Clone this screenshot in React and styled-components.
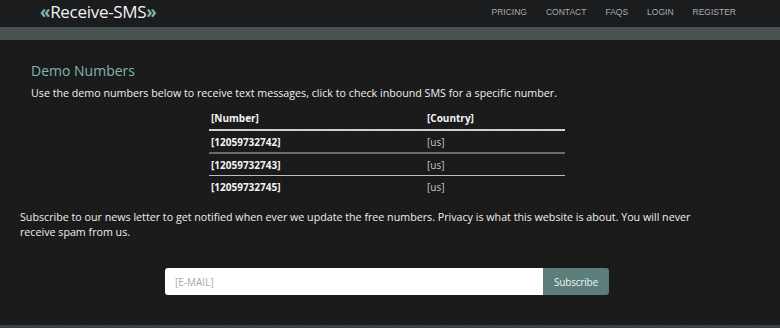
import React from 'react';
import styled, { createGlobalStyle } from 'styled-components';

const Global = createGlobalStyle`
  html, body {
    margin: 0;
    padding: 0;
    background: #191a1b;
  }
  body {
    font-family: "Open Sans", "DejaVu Sans", sans-serif;
    color: #eee;
  }
`;

const Page = styled.div`
  width: 780px;
  height: 328px;
  overflow: hidden;
  display: flex;
  flex-direction: column;
  background-color: #1a1a1b;
  background-image: radial-gradient(rgba(255,255,255,0.025) 1px, transparent 1px);
  background-size: 3px 3px;
`;

const Header = styled.header`
  height: 27px;
  background: #1b1c1e;
  display: flex;
  align-items: center;
  justify-content: space-between;
  padding: 0 44px 0 40px;
`;

const Logo = styled.a`
  font-family: "Open Sans", sans-serif;
  font-size: 17px;
  color: #f2f2f2;
  text-decoration: none;
  letter-spacing: -0.3px;
  margin-top: -4px;
`;

const Quote = styled.span`
  color: #7fb5b0;
  font-weight: 700;
`;

const Nav = styled.nav`
  display: flex;
  gap: 19px;
  margin-top: -3px;
`;

const NavLink = styled.a`
  font-family: "Liberation Sans", Arial, sans-serif;
  font-size: 8.5px;
  color: #a9acae;
  text-decoration: none;
`;

const Stripe = styled.div`
  height: 13px;
  background: #495152;
`;

const Main = styled.main`
  flex: 1;
  padding: 21px 20px 0 31px;
`;

const Title = styled.h2`
  margin: 0;
  font-size: 14px;
  font-weight: 400;
  color: #7fb8b0;
  line-height: 20px;
`;

const Lead = styled.p`
  margin: 4px 0 0;
  font-size: 10.7px;
  line-height: 16px;
  color: #f0f0f0;
`;

const Table = styled.table`
  width: 356px;
  margin: 7px 0 0 178px;
  border-collapse: collapse;
  font-size: 10px;
`;

const Th = styled.th`
  text-align: left;
  font-weight: 700;
  color: #f4f4f4;
  padding: 3px 2px 4px;
  border-bottom: 2px solid #d0d0d0;
  width: ${p => p.$w || 'auto'};
`;

const Td = styled.td`
  padding: 4px 2px 3px;
  color: ${p => (p.$muted ? '#c8c8c8' : '#f4f4f4')};
  font-weight: ${p => (p.$muted ? 400 : 700)};
  border-bottom: ${p => (p.$last ? 'none' : p.$thick ? '2px solid #6a6a6a' : '1px solid #bdbdbd')};
`;

const Note = styled.p`
  margin: 13px 0 0 -11px;
  font-size: 10.7px;
  line-height: 15px;
  color: #eeeeee;
  width: 695px;
`;

const Form = styled.form`
  display: flex;
  margin: 28px 0 0 134px;
  width: 444px;
  height: 27px;
`;

const Input = styled.input`
  flex: 1;
  border: none;
  border-radius: 3px 0 0 3px;
  background: #ffffff;
  padding: 0 10px;
  font-family: "Open Sans", sans-serif;
  font-size: 10px;
  outline: none;
  &::placeholder {
    color: #a8a8a8;
  }
`;

const Button = styled.button`
  width: 66px;
  border: none;
  border-radius: 0 3px 3px 0;
  background: #5b7e7a;
  color: #eef3f2;
  font-family: "Open Sans", sans-serif;
  font-size: 10px;
  letter-spacing: -0.2px;
`;

const Footer = styled.div`
  height: 3px;
  background: #3b4142;
`;

const rows = [
  { num: '12059732742', thick: true },
  { num: '12059732743' },
  { num: '12059732745', last: true },
];

export default function App() {
  return (
    <>
      <Global />
      <Page>
        <Header>
          <Logo href="#"><Quote>«</Quote>Receive-SMS<Quote>»</Quote></Logo>
          <Nav>
            {['PRICING', 'CONTACT', 'FAQS', 'LOGIN', 'REGISTER'].map(l => (
              <NavLink key={l} href="#">{l}</NavLink>
            ))}
          </Nav>
        </Header>
        <Stripe />
        <Main>
          <Title>Demo Numbers</Title>
          <Lead>Use the demo numbers below to receive text messages, click to check inbound SMS for a specific number.</Lead>
          <Table>
            <thead>
              <tr>
                <Th $w="212px">[Number]</Th>
                <Th>[Country]</Th>
              </tr>
            </thead>
            <tbody>
              {rows.map(r => (
                <tr key={r.num}>
                  <Td $thick={r.thick} $last={r.last}>[{r.num}]</Td>
                  <Td $muted $thick={r.thick} $last={r.last}>[us]</Td>
                </tr>
              ))}
            </tbody>
          </Table>
          <Note>Subscribe to our news letter to get notified when ever we update the free numbers. Privacy is what this website is about. You will never receive spam from us.</Note>
          <Form onSubmit={e => e.preventDefault()}>
            <Input placeholder="[E-MAIL]" />
            <Button type="submit">Subscribe</Button>
          </Form>
        </Main>
        <Footer />
      </Page>
    </>
  );
}
